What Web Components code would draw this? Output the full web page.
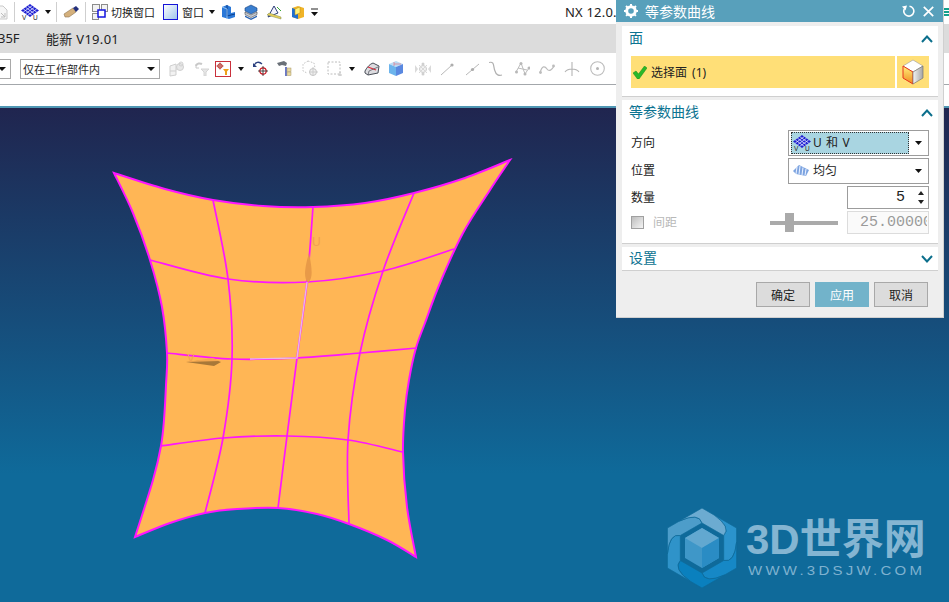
<!DOCTYPE html>
<html>
<head>
<meta charset="utf-8">
<style>
    html, body { margin: 0; padding: 0; width: 949px; height: 602px; overflow: hidden; background: #fff; }
    body { display: flex; flex-direction: column; position: relative; font: 11px "Noto Sans", "Noto Sans CJK SC", sans-serif; color: #222; }
    .t { white-space: nowrap; padding-bottom: 1px; }
</style>
</head>
<body>
<nx-bar style="--h:24px">
    <nx-icon name="frag" style="margin-left:-8px"></nx-icon>
    <nx-icon name="sep" style="margin-left:6px"></nx-icon>
    <nx-icon name="uvgrid" style="margin-left:6px"></nx-icon>
    <nx-icon name="arrow" style="margin-left:6px"></nx-icon>
    <nx-icon name="sep" style="margin-left:5px"></nx-icon>
    <nx-icon name="eraser" style="margin-left:6px"></nx-icon>
    <nx-icon name="sep" style="margin-left:6px"></nx-icon>
    <nx-icon name="switchwin" style="margin-left:6px"></nx-icon>
    <span class="t" style="margin-left:3px;width:45px">切换窗口</span>
    <nx-icon name="win" style="margin-left:7px"></nx-icon>
    <span class="t" style="margin-left:4px;width:23px">窗口</span>
    <nx-icon name="arrow" style="margin-left:4px"></nx-icon>
    <nx-icon name="solid" style="margin-left:6px"></nx-icon>
    <nx-icon name="stack" style="margin-left:8px"></nx-icon>
    <nx-icon name="draft" style="margin-left:8px"></nx-icon>
    <nx-icon name="box" style="margin-left:9px"></nx-icon>
    <nx-icon name="dropbar" style="margin-left:6px"></nx-icon>
    <span class="t" style="margin-left:247px;font-size:13px;letter-spacing:.2px">NX 12.0.2</span>
    <nx-icon name="edge" style="margin-left:auto"></nx-icon>
</nx-bar>
<nx-bar style="--h:29px;--bg:#dcdcdc">
    <span class="t" style="margin-left:-2px;width:48px;font-size:13px">35F</span>
    <span class="t" style="font-size:13px;letter-spacing:.3px">能新 V19.01</span>
</nx-bar>
<nx-bar style="--h:31px">
    <nx-combo style="margin-left:-40px;width:51px"></nx-combo>
    <nx-combo style="margin-left:9px;width:140px">仅在工作部件内</nx-combo>
    <nx-icon name="ghostpart" style="margin-left:8px"></nx-icon>
    <nx-icon name="ghostfilter" style="margin-left:10px"></nx-icon>
    <nx-icon name="redfilter" style="margin-left:5px"></nx-icon>
    <nx-icon name="arrow" style="margin-left:7px"></nx-icon>
    <nx-icon name="undotarget" style="margin-left:9px"></nx-icon>
    <nx-icon name="binoc" style="margin-left:8px"></nx-icon>
    <nx-icon name="ghostsphere" style="margin-left:10px"></nx-icon>
    <nx-icon name="dotted" style="margin-left:9px"></nx-icon>
    <nx-icon name="arrow" style="margin-left:7px"></nx-icon>
    <nx-icon name="wedge" style="margin-left:9px"></nx-icon>
    <nx-icon name="bluebox" style="margin-left:8px"></nx-icon>
    <nx-icon name="fourway" style="margin-left:11px"></nx-icon>
    <nx-icon name="line1" style="margin-left:9px"></nx-icon>
    <nx-icon name="line2" style="margin-left:10px"></nx-icon>
    <nx-icon name="scurve" style="margin-left:9px"></nx-icon>
    <nx-icon name="polyline" style="margin-left:12px"></nx-icon>
    <nx-icon name="spline" style="margin-left:9px"></nx-icon>
    <nx-icon name="normal" style="margin-left:9px"></nx-icon>
    <nx-icon name="circle" style="margin-left:10px"></nx-icon>
</nx-bar>
<nx-bar style="--h:21px;--line:#a3a7ab"></nx-bar>
<nx-canvas>
    <nx-surface></nx-surface>
    <nx-logo></nx-logo>
</nx-canvas>

<nx-dialog heading="等参数曲线">
    <nx-section heading="面" style="--pad:8px">
        <nx-picker label="选择面 (1)"></nx-picker>
    </nx-section>
    <nx-section heading="等参数曲线" style="--pad:9px">
        <nx-row label="方向"><nx-dropdown icon="uvgrid" active>U 和 V</nx-dropdown></nx-row>
        <nx-row label="位置"><nx-dropdown icon="stripes">均匀</nx-dropdown></nx-row>
        <nx-row label="数量"><nx-number value="5" spin></nx-number></nx-row>
        <nx-row label="间距" check disabled>
            <nx-slider></nx-slider>
            <nx-number value="25.00000" disabled></nx-number>
        </nx-row>
    </nx-section>
    <nx-section heading="设置" collapsed></nx-section>
    <nx-button slot="footer">确定</nx-button>
    <nx-button slot="footer" primary>应用</nx-button>
    <nx-button slot="footer">取消</nx-button>
</nx-dialog>

<script>
// w, h, svg body
const ICONS = {
    sep: [1, 20, `<rect width="1" height="20" fill="#cfcfcf"/>`],
    arrow: [6, 4, `<path d="M0 0H6L3 4Z" fill="#111"/>`],
    dropbar: [7, 9, `<path d="M0 1H7" stroke="#222"/><path d="M0 4H7L3.5 8Z" fill="#111"/>`],
    frag: [16, 16, `<path d="M2 2H11L15 6V15H2Z" fill="#f6f6f6" stroke="#c9c9c9"/><path d="M9 9L13 13M13 9V13H9" fill="none" stroke="#bdbdbd"/>`],
    uvgrid: [18, 16, `<path d="M9 0L18 6.500L9 13L0 6.500Z" fill="#1f1fd0"/>
        <path d="M4.500 3.250L13.500 9.750M6.750 1.600L15.750 8.100M2.250 4.900L11.250 11.400M13.500 3.250L4.500 9.750M11.250 1.600L2.250 8.100M15.750 4.900L6.750 11.400" stroke="#dfe4ff" stroke-width=".8"/>
        <text x="1" y="16" font-size="6.500" font-family="Liberation Sans" fill="#222">V</text>
        <text x="12" y="16" font-size="6.500" font-family="Liberation Sans" fill="#222">U</text>`],
    eraser: [16, 14, `<path d="M1 9L10 3L13 7L6 12L2 12Z" fill="#d4b07c" stroke="#8d7350" stroke-width=".6"/><path d="M10 3L13 1L16 4L13 7Z" fill="#24307c"/>`],
    switchwin: [16, 16, `<rect x=".5" y=".5" width="7" height="7" fill="#f2f2f2" stroke="#8b8b8b"/><rect x="9.500" y=".5" width="6" height="7" fill="#f2f2f2" stroke="#8b8b8b"/><rect x=".5" y="9.500" width="6" height="6" fill="#f2f2f2" stroke="#8b8b8b"/><rect x="6" y="6" width="7" height="7" fill="#fff" stroke="#1414e0" stroke-width="1.500"/>`],
    win: [15, 16, `<defs><linearGradient id="g" x1="0" y1="0" x2="1" y2="1"><stop offset="0" stop-color="#fff"/><stop offset="1" stop-color="#9cc4ea"/></linearGradient></defs><rect x=".5" y=".5" width="14" height="15" fill="url(#g)" stroke="#1414d8"/>`],
    solid: [15, 16, `<path d="M1 3L6 1L10 3V9L14 8V13L8 15L1 13Z" fill="#2a78d8"/><path d="M6 1V12L14 10" fill="none" stroke="#0c3f8c"/><path d="M1 3L6 5V15" fill="none" stroke="#8fc0f2"/>`],
    stack: [14, 16, `<path d="M7 1L13 4V7L7 10L1 7V4Z" fill="#3a7fd0" stroke="#17407c" stroke-width=".6"/><path d="M1 8L7 11L13 8V10.500L7 13.500L1 10.500Z" fill="#c9ced6" stroke="#444" stroke-width=".6"/><path d="M1 11.500L7 14.500L13 11.500V13L7 16L1 13Z" fill="#2a62b0"/>`],
    draft: [16, 16, `<path d="M2 13L8 2L12 9Z" fill="#f4f4ff" stroke="#2c3e78"/><path d="M1 11L15 15V13L3 9Z" fill="#e8cf5a" stroke="#7a8a50" stroke-width=".5"/><path d="M11 3L15 7" stroke="#38a838"/>`],
    box: [14, 16, `<path d="M1 4L7 2L13 4V13L7 15L1 13Z" fill="#f0b428"/><path d="M1 4L7 6V15L1 13Z" fill="#1f6fd0"/><path d="M4 5L9 3V9L4 11Z" fill="#fff27a" stroke="#b98a10" stroke-width=".5"/>`],
    edge: [5, 8, `<rect width="5" height="2" fill="#14a08c"/><rect y="3" width="5" height="2" fill="#14a08c"/><rect y="6" width="5" height="2" fill="#14a08c"/>`],
    ghostpart: [17, 17, `<path d="M2 6L8 4V15L2 16ZM8 9H13M2 11H8" fill="#f2f2f2" stroke="#cfcfcf"/><circle cx="12" cy="7" r="3.500" fill="#e8e8e8" stroke="#cfcfcf"/><circle cx="13" cy="4" r="2" fill="none" stroke="#cfcfcf"/>`],
    ghostfilter: [15, 15, `<path d="M1 5C2 2 5 2 7 3" fill="none" stroke="#c8c8c8" stroke-width="2"/><path d="M1 3V7H4" fill="none" stroke="#c8c8c8"/><path d="M6 8H14L11 11V15H9V11Z" fill="#e6e6e6" stroke="#d4d4d4"/>`],
    redfilter: [16, 16, `<rect x=".5" y=".5" width="15" height="15" fill="#fff" stroke="#c9303c"/><circle cx="5" cy="5" r="2.200" fill="none" stroke="#b0261e"/><path d="M5 1.500V8.500M1.500 5H8.500" stroke="#b0261e" stroke-width=".8"/><path d="M8 8H14L12 10.500V14H10V10.500Z" fill="#eda11a"/>`],
    undotarget: [15, 17, `<path d="M1 6C2 2 6 1 9 4" fill="none" stroke="#2a3f7e" stroke-width="1.300"/><path d="M0 3V7H4" fill="#2a3f7e"/><circle cx="10" cy="11" r="3.200" fill="none" stroke="#d01420" stroke-width="1.200"/><path d="M10 6V16M5 11H15" stroke="#222" stroke-width=".8"/>`],
    binoc: [16, 17, `<path d="M1 3L8 1L11 3L10 6L6 5L3 6Z" fill="#6a7078"/><path d="M9 7H11V16H9Z" fill="#6a78c8"/><rect x="11" y="8" width="4" height="3.500" fill="#e8d8a0" stroke="#a89868" stroke-width=".5"/><rect x="11" y="12" width="4" height="3.500" fill="#e8d8a0" stroke="#a89868" stroke-width=".5"/>`],
    ghostsphere: [16, 17, `<path d="M6 1L12 3L13 8M6 1L1 4V11L5 13" fill="none" stroke="#c4c4c4" stroke-dasharray="1.500 1.500"/><circle cx="11" cy="12" r="3.500" fill="#f0f0f0" stroke="#c4c4c4"/><path d="M11 7V16M7 12H16" stroke="#cccccc"/>`],
    dotted: [15, 16, `<rect x="1" y="1" width="12" height="12" fill="none" stroke="#bcbcbc" stroke-dasharray="2 1.500"/><path d="M13 11V15M11 14H15" stroke="#c4c4c4"/>`],
    wedge: [16, 14, `<path d="M1 9C3 5 6 2 9 1L15 4L14 11L4 13L1 11Z" fill="#dcdce0" stroke="#4a4f58"/><path d="M4 5L12 8" stroke="#e02a3a" stroke-width="1.300"/><path d="M4 13L5 9L14 5" fill="none" stroke="#4a4f58" stroke-width=".7"/>`],
    bluebox: [16, 17, `<path d="M1 4L8 1L15 4L8 7Z" fill="#bcdcf4"/><path d="M1 4L8 7V16L1 13Z" fill="#6cb4ec"/><path d="M15 4L8 7V16L15 13Z" fill="#5a88e0"/><path d="M6 2V6M6 4H13" stroke="#e86a78" stroke-width=".6"/>`],
    fourway: [16, 14, `<circle cx="8" cy="7" r="3.500" fill="#f2f2f2" stroke="#cccccc"/><path d="M0 3L3 7L0 11ZM16 3L13 7L16 11Z" fill="#dadada"/><circle cx="8" cy="2" r="1.500" fill="#d0d0d0"/><circle cx="8" cy="12" r="1.500" fill="#d0d0d0"/><path d="M4 3L12 11M12 3L4 11" stroke="#d8d8d8"/>`],
    line1: [15, 14, `<path d="M1 13L12 3" stroke="#b8b8b8"/><circle cx="12" cy="3" r="1.600" fill="#adadad"/>`],
    line2: [15, 14, `<path d="M1 13L14 2" stroke="#b8b8b8"/><circle cx="7.500" cy="7.500" r="1.600" fill="#adadad"/>`],
    scurve: [14, 16, `<path d="M0 1.500C6 0 4 6 6 10C7 14 10 15 13 14" fill="none" stroke="#b0b0b0" stroke-width="1.200"/>`],
    polyline: [15, 16, `<path d="M1 11L6 2L10 13L14 7M3 7L12 9" fill="none" stroke="#bcbcbc"/><circle cx="6" cy="2.500" r="1.500" fill="#b8b8b8"/><circle cx="10" cy="13" r="1.500" fill="#b8b8b8"/><circle cx="14" cy="7" r="1.500" fill="#b8b8b8"/><circle cx="1.500" cy="11" r="1.500" fill="#b8b8b8"/>`],
    spline: [16, 12, `<path d="M1 10C3 2 6 3 8 6C10 9 13 7 15 3" fill="none" stroke="#bcbcbc" stroke-width="1.200"/><circle cx="1.500" cy="9.500" r="1.400" fill="#bcbcbc"/><circle cx="14.500" cy="3" r="1.400" fill="#bcbcbc"/>`],
    normal: [16, 16, `<path d="M8 1V15M1 11C4 7 12 7 15 11" fill="none" stroke="#b4b4b4" stroke-width="1.100"/>`],
    circle: [15, 15, `<circle cx="7.500" cy="7.500" r="6.800" fill="none" stroke="#bcbcbc" stroke-width="1.100"/><circle cx="7.500" cy="7.500" r="1.500" fill="#b4b4b4"/>`],
    stripes: [16, 12, `<path d="M0 6L6 0L16 5L13 11L3 9Z" fill="#7da4e0"/><path d="M4 2L3 9M7 1L6 9.500M10 2.500L9 10M13 4L12 10.500" stroke="#e8f0ff" stroke-width="1.100"/>`],
    check: [14, 13, `<path d="M0 7L3 5L5.500 8L11.500 0L14 2L6 13H4.500Z" fill="#2ab82a" stroke="#138a13" stroke-width=".5"/>`],
    cube: [22, 26, `<defs><linearGradient id="c" x1="0" y1="0" x2="0" y2="1"><stop offset="0" stop-color="#fff07a"/><stop offset="1" stop-color="#f08a1e"/></linearGradient><linearGradient id="d" x1="0" y1="0" x2="1" y2="0"><stop offset="0" stop-color="#f4f4f4"/><stop offset="1" stop-color="#a4a4a4"/></linearGradient></defs>
        <path d="M1 7L11 1L21 7L11 13Z" fill="#fff" stroke="#9a9a9a" stroke-width=".6"/><path d="M1 7L11 13V25L1 19Z" fill="url(#c)" stroke="#e8321e"/><path d="M21 7L11 13V25L21 19Z" fill="url(#d)" stroke="#777" stroke-width=".7"/>`],
    gear: [14, 14, `<circle cx="7" cy="7" r="4.300" fill="none" stroke="#fff" stroke-width="3"/><path d="M7 0V14M0 7H14M2 2L12 12M12 2L2 12" stroke="#fff" stroke-width="2" stroke-dasharray="2.500 9 2.500"/>`],
    reset: [13, 12, `<path d="M7.500 1.200A5 5 0 1 1 2.300 4" fill="none" stroke="#fff" stroke-width="1.600"/><path d="M0 1.500L5 .5L3.500 5.500Z" fill="#fff"/>`],
    close: [11, 11, `<path d="M.8 .8L10.200 10.200M10.200 .8L.8 10.200" stroke="#fff" stroke-width="1.700"/>`],
    up: [12, 8, `<path d="M1 7L6 1.500L11 7" fill="none" stroke="#0c6f8c" stroke-width="2"/>`],
    down: [12, 8, `<path d="M1 1L6 6.500L11 1" fill="none" stroke="#0c6f8c" stroke-width="2"/>`],
    spinup: [6, 4, `<path d="M0 4H6L3 0Z" fill="#222"/>`],
    spindown: [6, 4, `<path d="M0 0H6L3 4Z" fill="#222"/>`]
};

class NxIcon extends HTMLElement {
    connectedCallback() {
        const [w, h, body] = ICONS[this.getAttribute('name')];
        if (!this.shadowRoot) this.attachShadow({ mode: 'open' });
        this.shadowRoot.innerHTML = `
            <style>:host { display: block; flex: none; width: ${w}px; height: ${h}px; line-height: 0; }</style>
            <svg width="${w}" height="${h}" viewBox="0 0 ${w} ${h}">${body}</svg>`;
    }
}
customElements.define('nx-icon', NxIcon);

class NxBar extends HTMLElement {
    constructor() {
        super();
        this.attachShadow({ mode: 'open' }).innerHTML = `
            <style>
                :host { display: flex; flex: none; align-items: center; height: var(--h); background: var(--bg, #fff); border-top: 0 solid var(--line, transparent); overflow: hidden; }
                :host([style*="--line"]) { border-top-width: 1px; border-bottom: 2px solid #4f97b4; }
            </style>
            <slot></slot>`;
    }
}
customElements.define('nx-bar', NxBar);

class NxCombo extends HTMLElement {
    constructor() {
        super();
        this.attachShadow({ mode: 'open' }).innerHTML = `
            <style>
                :host { display: flex; flex: none; align-items: center; box-sizing: border-box; height: 20px; border: 1px solid #a9a9a9; background: #fff; padding: 0 3px 0 2px; font-size: 11px; color: #2a2a2a; white-space: nowrap; }
                .fill { flex: 1; }
                svg { display: block; flex: none; margin-right: 1px; }
            </style>
            <span class="fill"><slot></slot></span>
            <svg width="8" height="4"><path d="M0 0H8L4 4Z" fill="#111"/></svg>`;
    }
}
customElements.define('nx-combo', NxCombo);

class NxCanvas extends HTMLElement {
    constructor() {
        super();
        this.attachShadow({ mode: 'open' }).innerHTML = `
            <style>:host { display: block; flex: 1; min-height: 0; position: relative; overflow: hidden; background: linear-gradient(#20254f 0, #0f6a9a 74%); }</style>
            <slot></slot>`;
    }
}
customElements.define('nx-canvas', NxCanvas);

// Catmull-Rom through the points, first point not moved to
function spline(pts, move = true) {
    let d = move ? `M${pts[0][0]} ${pts[0][1]}` : '';
    for (let i = 0; i < pts.length - 1; i++) {
        const p0 = pts[i - 1] || pts[i], p1 = pts[i], p2 = pts[i + 1], p3 = pts[i + 2] || p2;
        const c1 = [p1[0] + (p2[0] - p0[0]) / 6, p1[1] + (p2[1] - p0[1]) / 6];
        const c2 = [p2[0] - (p3[0] - p1[0]) / 6, p2[1] - (p3[1] - p1[1]) / 6];
        d += `C${c1[0].toFixed(1)} ${c1[1].toFixed(1)} ${c2[0].toFixed(1)} ${c2[1].toFixed(1)} ${p2[0]} ${p2[1]}`;
    }
    return d;
}

class NxSurface extends HTMLElement {
    constructor() {
        super();
        const top = [[114, 173], [165, 189], [213, 200], [263, 206], [313, 207], [365, 203], [414, 193], [465, 178], [510, 160]];
        const right = [[510, 160], [490, 190], [463, 233], [440, 283], [425, 323], [416, 348], [409, 380], [405, 410], [403, 452], [407, 507], [416, 557]];
        const bottom = [[416, 557], [387, 540], [349, 524], [317, 514], [278, 508], [237, 509], [205, 513], [170, 523], [135, 537]];
        const left = [[135, 537], [153, 480], [161, 446], [164, 420], [166, 385], [167, 353], [162, 307], [150, 260], [133, 213], [114, 173]];
        const rows = [
            [[150, 260], [228, 279], [307, 282], [383, 271], [454, 249]],
            [[167, 353], [232, 359], [297, 358], [360, 353], [417, 348]],
            [[161, 446], [223, 438], [287, 436], [348, 440], [403, 452]]
        ];
        const cols = [
            [[213, 200], [228, 279], [232, 359], [223, 438], [205, 513]],
            [[313, 207], [307, 282], [297, 358], [287, 436], [278, 508]],
            [[414, 193], [383, 271], [360, 353], [348, 440], [349, 524]]
        ];
        const outline = spline(top) + spline(right, false) + spline(bottom, false) + spline(left, false) + 'Z';
        const lines = [...rows, ...cols].map(p => `<path d="${spline(p)}"/>`).join('');
        this.attachShadow({ mode: 'open' }).innerHTML = `
            <style>
                :host { display: block; width: 949px; height: 494px; }
                svg { display: block; }
            </style>
            <svg width="949" height="494" viewBox="0 108 949 494">
                <path d="${outline}" fill="#ffb655"/>
                <g fill="none" stroke="#ff14ff" stroke-width="1.700">${lines}</g>
                <path d="${outline}" fill="none" stroke="#ff14ff" stroke-width="2" stroke-linejoin="miter"/>
                <path d="M307 282L297 358L250 359" fill="none" stroke="#e8b8e8" stroke-width="1.400"/>
                <path d="M307.500 282C304 278 304 270 309 253C312 268 313 277 309 282Z" fill="#e89a48"/>
                <path d="M186 362L213 359L221 362L214 366Z" fill="#a87838"/>
                <path d="M186 362L213 358L220 361Z" fill="#f4a850"/>
                <text x="312" y="246" font-size="12" font-family="Liberation Sans" fill="#f2a050">U</text>
                <text x="187" y="362" font-size="11" font-family="Liberation Sans" fill="#f2a050">V</text>
            </svg>`;
    }
}
customElements.define('nx-surface', NxSurface);

class NxLogo extends HTMLElement {
    constructor() {
        super();
        const cx = 36, cy = 40, R = 40, r = 25;
        const pt = (a, d) => [cx + d * Math.cos(a * Math.PI / 180), cy + d * Math.sin(a * Math.PI / 180)];
        const fmt = p => p[0].toFixed(1) + ' ' + p[1].toFixed(1);
        const colors = ['#2b93cc', '#1688c6', '#0a80be', '#2f93c9', '#4d9dca', '#6cabd1'];
        const mix = (p, q, t) => [p[0] + (q[0] - p[0]) * t, p[1] + (q[1] - p[1]) * t];
        let blades = '';
        for (let k = 0; k < 6; k++) {
            const a = -90 + 60 * k;
            const v1 = pt(a, R), v2 = pt(a + 60, R), v3 = pt(a + 120, R);
            const o1 = mix(v1, v2, .35), o2 = mix(v2, v3, .35);
            const i1 = pt(a + 60, r), i2 = pt(a + 120, r);
            const c1 = pt(a + 55, 36), c2 = pt(a + 115, 36);
            blades += `<path d="M${fmt(i1)}Q${fmt(c1)} ${fmt(o1)}L${fmt(v2)}L${fmt(o2)}Q${fmt(c2)} ${fmt(i2)}Z" fill="${colors[k]}" stroke="#0f6a9a" stroke-width=".7"/>`;
        }
        this.attachShadow({ mode: 'open' }).innerHTML = `
            <style>
                :host { position: absolute; left: 666px; top: 400px; display: flex; color: #84b5d2; white-space: nowrap; font-family: "Liberation Sans", "Noto Sans CJK SC", sans-serif; }
                svg { display: block; flex: none; }
                .txt { margin-left: 8px; padding-top: 9px; }
                .big { font-size: 42px; font-weight: 700; line-height: 46px; }
                .url { font-size: 12px; line-height: 14px; letter-spacing: 2.600px; margin: 1px 0 0 2px; transform: scaleX(1.25); transform-origin: 0 0; color: #7fb2d0; }
            </style>
            <svg width="72" height="80" viewBox="0 0 72 80">
                ${blades}
                <path d="M36 20L53 30V50L36 60L19 50V30Z" fill="#3f97c8"/>
                <path d="M36 20L53 30L36 40L19 30Z" fill="#62a8d0"/>
                <path d="M53 30V50L36 60V40Z" fill="#2a8cc4"/>
            </svg>
            <div class="txt">
                <div class="big">3D世界网</div>
                <div class="url">WWW.3DSJW.COM</div>
            </div>`;
    }
}
customElements.define('nx-logo', NxLogo);

class NxDialog extends HTMLElement {
    constructor() {
        super();
        this.attachShadow({ mode: 'open' }).innerHTML = `
            <style>
                :host { position: absolute; left: 616px; top: 0; width: 328px; height: 318px; box-sizing: border-box; display: flex; flex-direction: column; background: #eeeeee; border: solid #d0d0d0; border-width: 0 1px 1px 0; font-size: 12px; color: #222; }
                .title { display: flex; align-items: center; flex: none; height: 22px; background: #58a0bb; color: #fff; font-size: 14px; padding: 0 9px 0 8px; }
                .title span { margin-left: 7px; flex: 1; padding-bottom: 1px; }
                .title nx-icon:last-child { margin-left: 8px; }
                .body { display: flex; flex-direction: column; gap: 3px; padding: 4px 5px 0 6px; }
                .foot { display: flex; justify-content: flex-end; gap: 5px; padding: 11px 15px 0 0; }
            </style>
            <div class="title">
                <nx-icon name="gear"></nx-icon>
                <span>${this.getAttribute('heading')}</span>
                <nx-icon name="reset"></nx-icon>
                <nx-icon name="close"></nx-icon>
            </div>
            <div class="body"><slot></slot></div>
            <div class="foot"><slot name="footer"></slot></div>`;
    }
}
customElements.define('nx-dialog', NxDialog);

class NxSection extends HTMLElement {
    constructor() {
        super();
        const collapsed = this.hasAttribute('collapsed');
        this.attachShadow({ mode: 'open' }).innerHTML = `
            <style>
                :host { display: block; background: #fff; border-bottom: 1px solid #cfcfcf; }
                .head { display: flex; align-items: center; justify-content: space-between; height: ${collapsed ? 23 : 26}px; padding: 0 5px 0 7px; margin-bottom: ${collapsed ? 0 : 4}px; font-size: 14px; color: #0c7391; }
                .head span { line-height: 20px; margin-top: -2px; }
                .content { display: ${collapsed ? 'none' : 'flex'}; flex-direction: column; gap: 2px; padding: 0 9px var(--pad, 8px); }
            </style>
            <div class="head"><span>${this.getAttribute('heading')}</span><nx-icon name="${collapsed ? 'down' : 'up'}"></nx-icon></div>
            <div class="content"><slot></slot></div>`;
    }
}
customElements.define('nx-section', NxSection);

class NxPicker extends HTMLElement {
    constructor() {
        super();
        this.attachShadow({ mode: 'open' }).innerHTML = `
            <style>
                :host { display: flex; gap: 2px; height: 32px; }
                .sel { flex: 1; display: flex; align-items: center; gap: 4px; background: #ffdf77; padding-left: 2px; color: #222; word-spacing: 2px; }
                .btn { width: 32px; display: flex; align-items: center; justify-content: center; background: #ffdf77; }
            </style>
            <div class="sel"><nx-icon name="check"></nx-icon><span>${this.getAttribute('label')}</span></div>
            <div class="btn"><nx-icon name="cube"></nx-icon></div>`;
    }
}
customElements.define('nx-picker', NxPicker);

class NxRow extends HTMLElement {
    constructor() {
        super();
        const dis = this.hasAttribute('disabled');
        const check = this.hasAttribute('check');
        this.attachShadow({ mode: 'open' }).innerHTML = `
            <style>
                :host { display: flex; align-items: center; font-size: 12px; }
                .box { width: 13px; height: 13px; box-sizing: border-box; border: 1px solid #a0a0a0; background: linear-gradient(135deg, #bdbdbd, #f4f4f4); margin-right: 9px; }
                .lab { color: ${dis ? '#b8b8b8' : '#222'}; padding-bottom: 2px; }
                .ctl { margin-left: auto; display: flex; align-items: center; gap: 9px; }
            </style>
            ${check ? '<div class="box"></div>' : ''}
            <span class="lab">${this.getAttribute('label')}</span>
            <div class="ctl"><slot></slot></div>`;
    }
}
customElements.define('nx-row', NxRow);

class NxDropdown extends HTMLElement {
    constructor() {
        super();
        const active = this.hasAttribute('active');
        this.attachShadow({ mode: 'open' }).innerHTML = `
            <style>
                :host { display: flex; align-items: center; box-sizing: border-box; width: 141px; height: 26px; border: 1px solid #9c9c9c; background: #fff; padding: 1px 6px 1px 2px; }
                .val { flex: 1; align-self: stretch; display: flex; align-items: center; gap: ${active ? 2 : 4}px; box-sizing: border-box; padding-left: 1px; background: ${active ? '#a9d5e1' : 'transparent'}; border: 1px ${active ? 'dotted #333' : 'solid transparent'}; letter-spacing: ${active ? '.6px' : '0'}; }
                .val span { padding-bottom: 3px; }
                svg { display: block; margin-left: 6px; }
            </style>
            <div class="val"><nx-icon name="${this.getAttribute('icon')}"></nx-icon><span><slot></slot></span></div>
            <svg width="7" height="4"><path d="M0 0H7L3.500 4Z" fill="#111"/></svg>`;
    }
}
customElements.define('nx-dropdown', NxDropdown);

class NxNumber extends HTMLElement {
    constructor() {
        super();
        const dis = this.hasAttribute('disabled');
        const spin = this.hasAttribute('spin');
        this.attachShadow({ mode: 'open' }).innerHTML = `
            <style>
                :host { display: flex; align-items: center; box-sizing: border-box; width: 82px; height: 23px; border: 1px solid ${dis ? '#dcdcdc' : '#9c9c9c'}; background: ${dis ? '#fafafa' : '#fff'}; overflow: hidden; font: 15px "Liberation Mono", monospace; color: ${dis ? '#9a9a9a' : '#222'}; white-space: nowrap; }
                .v { flex: 1; min-width: 0; overflow: hidden; margin-right: ${dis ? 1 : 0}px; padding-left: ${dis ? 12 : 0}px; text-align: ${dis ? 'left' : 'right'}; }
                .s { display: flex; flex-direction: column; gap: 5px; margin: 0 4px 0 13px; }
            </style>
            <span class="v">${this.getAttribute('value')}</span>
            ${spin ? '<div class="s"><nx-icon name="spinup"></nx-icon><nx-icon name="spindown"></nx-icon></div>' : ''}`;
    }
}
customElements.define('nx-number', NxNumber);

class NxSlider extends HTMLElement {
    constructor() {
        super();
        this.attachShadow({ mode: 'open' }).innerHTML = `
            <style>
                :host { display: flex; align-items: center; width: 68px; height: 19px; }
                .a { width: 15px; height: 4px; background: #aaa; }
                .t { width: 9px; height: 19px; background: #aaa; }
                .b { flex: 1; height: 4px; background: #aaa; }
            </style>
            <div class="a"></div><div class="t"></div><div class="b"></div>`;
    }
}
customElements.define('nx-slider', NxSlider);

class NxButton extends HTMLElement {
    constructor() {
        super();
        const primary = this.hasAttribute('primary');
        this.attachShadow({ mode: 'open' }).innerHTML = `
            <style>
                :host { display: flex; align-items: center; justify-content: center; box-sizing: border-box; width: 54px; height: 25px; font-size: 12px; background: ${primary ? '#72b3ca' : '#dcdcdc'}; color: ${primary ? '#fff' : '#222'}; border: 1px solid ${primary ? '#72b3ca' : '#a8a8a8'}; }
            </style>
            <slot></slot>`;
    }
}
customElements.define('nx-button', NxButton);
</script>
</body>
</html>
